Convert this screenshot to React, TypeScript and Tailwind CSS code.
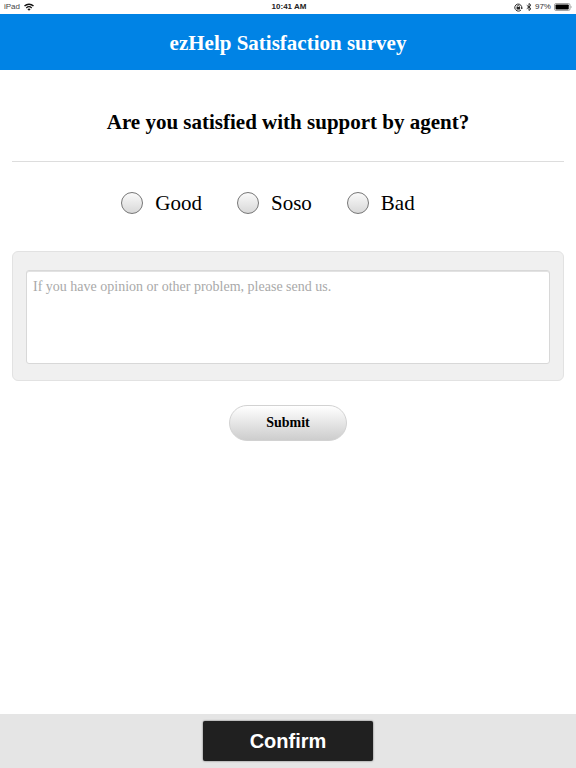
import { useState } from "react";

const options = ["Good", "Soso", "Bad"];

function StatusBar() {
  return (
    <div className="grid h-3.5 shrink-0 grid-cols-3 items-center px-1 font-['Liberation_Sans',sans-serif] text-[8px] leading-[14px] text-[#222]">
      <div className="flex items-center gap-1">
        <span className="text-[#444]">iPad</span>
        <svg className="h-2 w-2.5" viewBox="0 0 20 16" fill="none" stroke="#111" strokeWidth="2.8" aria-hidden>
          <path d="M1 6.2C6.2 1.1 13.8 1.1 19 6.2" />
          <path d="M4.6 9.8c3.2-3 7.6-3 10.8 0" />
          <path d="M10 15.5 6.9 12.3c1.8-1.6 4.4-1.6 6.2 0z" fill="#111" stroke="none" />
        </svg>
      </div>
      <span className="pl-0.5 text-center font-bold">10:41 AM</span>
      <div className="flex items-center justify-end gap-[3px]">
        <svg className="size-[9px]" viewBox="0 0 16 16" fill="none" stroke="#222" aria-hidden>
          <path d="M2.6 11.8A6.2 6.2 0 1 1 13.6 9.5" strokeWidth="1.7" />
          <path d="M3.2 12.4A6.2 6.2 0 0 0 12.4 12.4" strokeWidth="1.7" />
          <path d="m11.5 8.5 2.3 2.8L16 8.3z" fill="#222" stroke="none" />
          <rect x="4.6" y="7" width="6" height="4.6" fill="#222" stroke="none" />
          <path d="M5.8 7.5V6a1.9 1.9 0 0 1 3.8 0v1.5" strokeWidth="1.3" />
        </svg>
        <svg className="h-2 w-1.5" viewBox="0 0 12 16" fill="none" stroke="#222" strokeWidth="1.8" aria-hidden>
          <path d="m1.5 4.5 8.5 7L6 15V1l4 3.5-8.5 7" />
        </svg>
        <span className="text-[#333]">97%</span>
        <svg className="h-2 w-[18px]" viewBox="0 0 36 16" aria-hidden>
          <rect x="1" y="1" width="31" height="14" rx="3" fill="#fff" stroke="#888" strokeWidth="1.5" />
          <rect x="3" y="3" width="26.5" height="10" rx="1.5" fill="#000" />
          <path d="M33.5 5.5c2 .8 2 4.2 0 5z" fill="#888" />
        </svg>
      </div>
    </div>
  );
}

export default function App() {
  const [answer, setAnswer] = useState("");
  const [opinion, setOpinion] = useState("");

  return (
    <div className="flex min-h-dvh flex-col bg-white font-['Liberation_Serif',serif] text-black">
      <StatusBar />
      <header className="flex h-14 shrink-0 items-center justify-center bg-[#0083e5] pt-0.5">
        <h1 className="text-[21px] leading-7 font-bold text-white">ezHelp Satisfaction survey</h1>
      </header>

      <form className="flex flex-1 flex-col px-3" onSubmit={(e) => e.preventDefault()}>
        <h2 id="question" className="border-b border-[#ddd] pt-[38px] pb-[25px] text-center text-[21px] leading-7 font-bold">
          Are you satisfied with support by agent?
        </h2>

        <div role="radiogroup" aria-labelledby="question" className="mt-[27px] flex justify-center gap-[35px] pr-10">
          {options.map((option) => (
            <label key={option} className="flex items-center gap-3 text-[21px] leading-7">
              <input
                type="radio"
                name="answer"
                value={option}
                checked={answer === option}
                onChange={() => setAnswer(option)}
                className="size-[22px] appearance-none rounded-full border border-[#777] bg-linear-to-b from-[#fafafa] to-[#d8d8d8] checked:border-[6px] checked:border-[#0083e5]"
              />
              {option}
            </label>
          ))}
        </div>

        <div className="mt-[34px] rounded-md border border-[#e2e2e2] bg-[#f0f0f0] px-[13px] pt-[18px] pb-4">
          <textarea
            aria-label="Opinion"
            value={opinion}
            onChange={(e) => setOpinion(e.target.value)}
            placeholder="If you have opinion or other problem, please send us."
            className="block h-[94px] w-full resize-none rounded-[3px] border border-[#d8d8d8] bg-white px-1.5 py-2 text-sm leading-4 shadow-[inset_0_1px_0_#e2e2e2] placeholder:text-[#a9a9a9]"
          />
        </div>

        <button
          type="submit"
          className="mt-6 h-9 w-[118px] self-center rounded-full border border-[#d2d2d2] bg-linear-to-b from-white to-[#cdcdcd] text-sm font-bold"
        >
          Submit
        </button>
      </form>

      <footer className="flex shrink-0 justify-center bg-[#e5e5e5] py-[7px]">
        <button
          type="button"
          className="h-10 w-[170px] rounded-xs bg-[#202020] font-['Liberation_Sans',sans-serif] text-xl font-bold text-white shadow-[0_0_2px_#555]"
        >
          Confirm
        </button>
      </footer>
    </div>
  );
}
